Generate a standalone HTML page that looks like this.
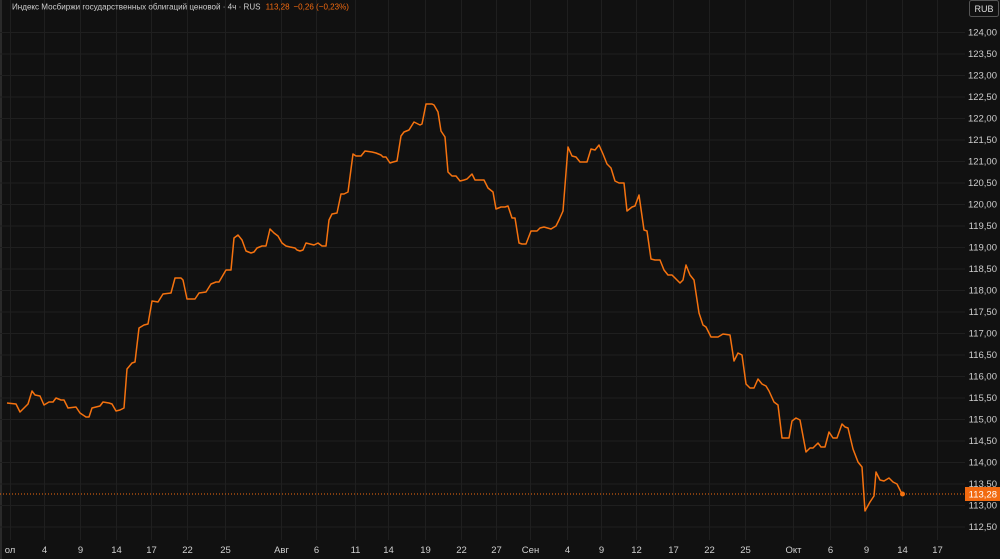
<!DOCTYPE html>
<html><head><meta charset="utf-8"><style>
html,body{margin:0;padding:0;background:#111;width:1000px;height:559px;overflow:hidden;font-family:"Liberation Sans",sans-serif}
</style></head><body>
<svg width="1000" height="559" xmlns="http://www.w3.org/2000/svg" style="position:absolute;left:0;top:0">
<rect width="1000" height="559" fill="#111111"/>
<rect x="0" y="0" width="2" height="559" fill="#2a2a2a"/>
<g stroke="#1f1f1f" stroke-width="1">
<line x1="0" x2="965" y1="32.5" y2="32.5"/><line x1="0" x2="965" y1="54" y2="54"/><line x1="0" x2="965" y1="75.5" y2="75.5"/><line x1="0" x2="965" y1="97" y2="97"/><line x1="0" x2="965" y1="118.5" y2="118.5"/><line x1="0" x2="965" y1="140" y2="140"/><line x1="0" x2="965" y1="161.5" y2="161.5"/><line x1="0" x2="965" y1="183" y2="183"/><line x1="0" x2="965" y1="204.5" y2="204.5"/><line x1="0" x2="965" y1="226" y2="226"/><line x1="0" x2="965" y1="247.5" y2="247.5"/><line x1="0" x2="965" y1="269" y2="269"/><line x1="0" x2="965" y1="290.5" y2="290.5"/><line x1="0" x2="965" y1="312" y2="312"/><line x1="0" x2="965" y1="333.5" y2="333.5"/><line x1="0" x2="965" y1="355" y2="355"/><line x1="0" x2="965" y1="376.5" y2="376.5"/><line x1="0" x2="965" y1="398" y2="398"/><line x1="0" x2="965" y1="419.5" y2="419.5"/><line x1="0" x2="965" y1="441" y2="441"/><line x1="0" x2="965" y1="462.5" y2="462.5"/><line x1="0" x2="965" y1="484" y2="484"/><line x1="0" x2="965" y1="505.5" y2="505.5"/><line x1="0" x2="965" y1="527" y2="527"/>
<line x1="10.5" x2="10.5" y1="0" y2="540"/><line x1="44.5" x2="44.5" y1="0" y2="540"/><line x1="80.5" x2="80.5" y1="0" y2="540"/><line x1="116.5" x2="116.5" y1="0" y2="540"/><line x1="151.5" x2="151.5" y1="0" y2="540"/><line x1="187.5" x2="187.5" y1="0" y2="540"/><line x1="225.5" x2="225.5" y1="0" y2="540"/><line x1="281.5" x2="281.5" y1="0" y2="540"/><line x1="316.5" x2="316.5" y1="0" y2="540"/><line x1="355.5" x2="355.5" y1="0" y2="540"/><line x1="388.5" x2="388.5" y1="0" y2="540"/><line x1="425.5" x2="425.5" y1="0" y2="540"/><line x1="461.5" x2="461.5" y1="0" y2="540"/><line x1="496.5" x2="496.5" y1="0" y2="540"/><line x1="530.5" x2="530.5" y1="0" y2="540"/><line x1="567.5" x2="567.5" y1="0" y2="540"/><line x1="601.5" x2="601.5" y1="0" y2="540"/><line x1="636.5" x2="636.5" y1="0" y2="540"/><line x1="673.5" x2="673.5" y1="0" y2="540"/><line x1="709.5" x2="709.5" y1="0" y2="540"/><line x1="745.5" x2="745.5" y1="0" y2="540"/><line x1="793.5" x2="793.5" y1="0" y2="540"/><line x1="830.5" x2="830.5" y1="0" y2="540"/><line x1="866.5" x2="866.5" y1="0" y2="540"/><line x1="902.5" x2="902.5" y1="0" y2="540"/><line x1="937.5" x2="937.5" y1="0" y2="540"/>
</g>
<line x1="0" x2="965" y1="494" y2="494" stroke="#f26a10" stroke-width="1" stroke-dasharray="1,2"/>
<polyline fill="none" stroke="#f5720f" stroke-width="1.5" stroke-linejoin="round" points="7,403 16,404 20,412 28,404 32,391 35,395 40,396 44,405 49,402 53,402 56,398 61,400 64,400 68,408 76,407 80,413 86,417 89,417 92,408 100,406 103,402 109,403 112,404 116,411 120,410 124,408 127,369 132,363 135,362 139,328 144,325 148,324 152,301 158,302 163,294 171,293 175,278 181,278 183,280 187,299 195,299 199,293 206,292 211,284 216,282 219,282 226,270 231,270 234,238 238,235 242,240 246,251 251,253 254,252 257,248 262,246 266,246 270,229 274,233 278,236 282,243 286,246 290,247 295,248 297,250 300,251 303,250 306,243 310,244 314,245 318,243 322,246 326,246 329,220 332,214 337,213 341,194 344,194 348,192 353,154 356,156 361,156 365,151 372,152 376,153 381,155 383,157 386,157 390,163 393,162 397,161 401,136 404,132 409,130 414,122 420,125 422,124 426,104 432,104 434,105 438,112 441,131 445,137 448,172 452,176 456,176 460,181 464,180 467,179 472,174 475,180 480,180 484,180 488,188 493,192 496,209 501,207 505,207 508,206 512,218 515,218 519,243 522,244 526,244 531,231 537,231 540,228 544,227 551,229 556,226 559,220 563,211 568,147 572,156 576,157 580,162 584,162 587,162 591,149 595,150 599,145 603,154 607,164 611,168 615,181 619,183 624,183 627,211 632,207 635,206 639,195 644,230 647,231 651,259 655,260 660,260 664,270 668,275 672,275 677,280 680,283 683,280 686,265 690,275 694,280 699,313 703,325 706,327 711,337 718,337 723,334 730,335 734,361 738,353 742,355 746,384 750,388 754,388 758,379 762,384 766,386 769,391 774,402 778,405 782,438 789,438 792,421 796,418 800,420 806,452 810,448 813,448 818,443 821,447 825,447 829,432 833,438 837,438 842,424 845,427 848,428 853,449 858,462 862,467 865,511 870,502 874,496 876,472 880,480 884,481 889,478 893,482 897,484 902,494"/>
<circle cx="902.5" cy="494" r="2.5" fill="#f5720f"/>
<g font-size="9.5" fill="#cfcfcf" text-anchor="end">
<text x="997" y="35.5">124,00</text><text x="997" y="57">123,50</text><text x="997" y="78.5">123,00</text><text x="997" y="100">122,50</text><text x="997" y="121.5">122,00</text><text x="997" y="143">121,50</text><text x="997" y="164.5">121,00</text><text x="997" y="186">120,50</text><text x="997" y="207.5">120,00</text><text x="997" y="229">119,50</text><text x="997" y="250.5">119,00</text><text x="997" y="272">118,50</text><text x="997" y="293.5">118,00</text><text x="997" y="315">117,50</text><text x="997" y="336.5">117,00</text><text x="997" y="358">116,50</text><text x="997" y="379.5">116,00</text><text x="997" y="401">115,50</text><text x="997" y="422.5">115,00</text><text x="997" y="444">114,50</text><text x="997" y="465.5">114,00</text><text x="997" y="487">113,50</text><text x="997" y="508.5">113,00</text><text x="997" y="530">112,50</text>
</g>
<rect x="965" y="487" width="35" height="14" fill="#f26a10"/>
<text x="997" y="497.5" font-size="9.5" fill="#ffffff" text-anchor="end">113,28</text>
<rect x="969.5" y="0.5" width="29" height="16" rx="2" fill="#111" stroke="#555"/>
<text x="984" y="12" font-size="9" fill="#ddd" text-anchor="middle">RUB</text>
<g font-size="9.5" fill="#cfcfcf" text-anchor="middle">
<text x="10" y="553">ол</text><text x="44.5" y="553">4</text><text x="80.5" y="553">9</text><text x="116.5" y="553">14</text><text x="151.5" y="553">17</text><text x="187.5" y="553">22</text><text x="225.5" y="553">25</text><text x="281.5" y="553">Авг</text><text x="316.5" y="553">6</text><text x="355.5" y="553">11</text><text x="388.5" y="553">14</text><text x="425.5" y="553">19</text><text x="461.5" y="553">22</text><text x="496.5" y="553">27</text><text x="530.5" y="553">Сен</text><text x="567.5" y="553">4</text><text x="601.5" y="553">9</text><text x="636.5" y="553">12</text><text x="673.5" y="553">17</text><text x="709.5" y="553">22</text><text x="745.5" y="553">25</text><text x="793.5" y="553">Окт</text><text x="830.5" y="553">6</text><text x="866.5" y="553">9</text><text x="902.5" y="553">14</text><text x="937.5" y="553">17</text>
</g>
<text x="12" y="9.5" font-size="8.5" fill="#cfcfcf" textLength="337" lengthAdjust="spacingAndGlyphs">Индекс Мосбиржи государственных облигаций ценовой · 4ч · RUS <tspan fill="#f26a10" dx="3">113,28</tspan><tspan fill="#f26a10" dx="4">−0,26 (−0,23%)</tspan></text>
</svg>
</body></html>
